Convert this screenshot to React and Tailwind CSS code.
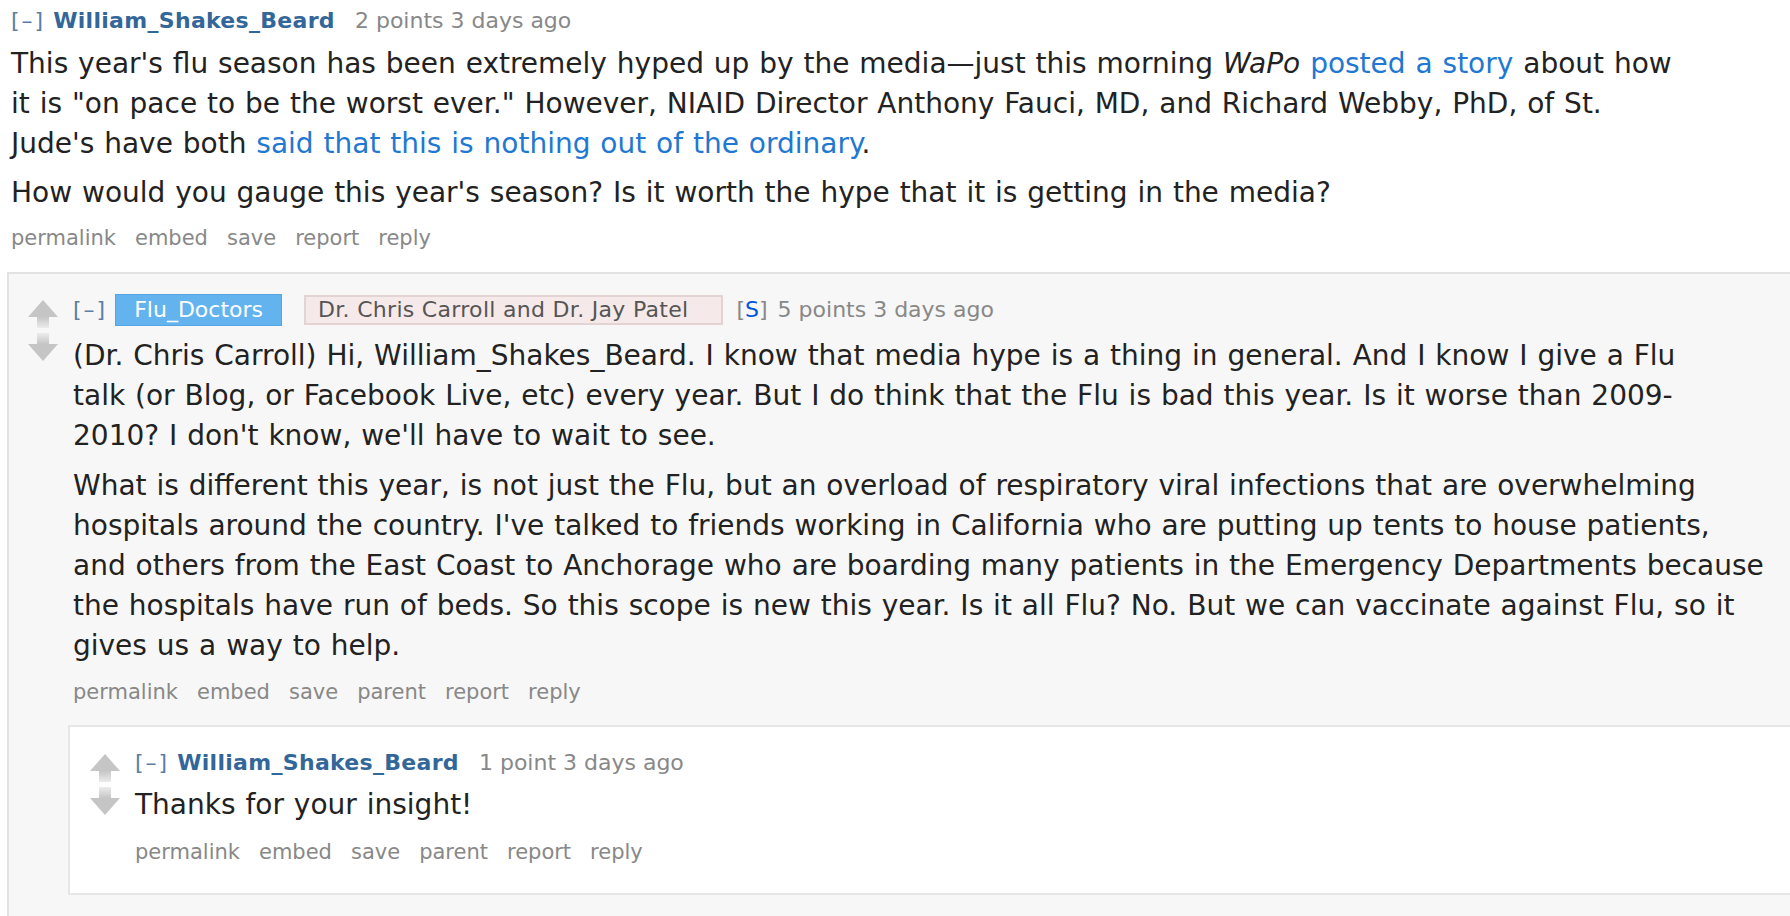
import React, { useId } from "react";

const font = "font-['DejaVu_Sans','Verdana',sans-serif]";

function VoteArrow({ down }) {
  const id = useId();
  return (
    <svg
      width="30"
      height="28"
      viewBox="0 0 30 28"
      className={down ? "rotate-180" : ""}
    >
      <defs>
        <linearGradient id={id} x1="0" y1="0" x2="0" y2="1">
          <stop offset="0" stopColor="#c5c5c5" />
          <stop offset="0.6" stopColor="#c5c5c5" />
          <stop offset="1" stopColor="#ececec" />
        </linearGradient>
      </defs>
      <path
        d="M15 0 L30 17 L21 17 L21 28 L9 28 L9 17 L0 17 Z"
        fill={`url(#${id})`}
      />
    </svg>
  );
}

function Arrows() {
  return (
    <div className="flex w-[30px] shrink-0 flex-col gap-[5px] pt-[6px]">
      <VoteArrow />
      <VoteArrow down />
    </div>
  );
}

function Buttons({ parent }) {
  const items = parent
    ? ["permalink", "embed", "save", "parent", "report", "reply"]
    : ["permalink", "embed", "save", "report", "reply"];
  return (
    <ul className="flex gap-[19px] text-[21px] leading-[30px] text-[#888]">
      {items.map((it) => (
        <li key={it}>{it}</li>
      ))}
    </ul>
  );
}

function Collapse() {
  return <span className="tracking-[2px] text-[#5a7ea6]">[–]</span>;
}

function Author({ children }) {
  return (
    <span className="ml-[8px] font-bold tracking-[0.3px] text-[#336699]">
      {children}
    </span>
  );
}

const link = "text-[#1f78d1]";
const md = "text-[28px] leading-[40px] [word-spacing:1px]";

export default function App() {
  return (
    <div
      className={`h-screen overflow-hidden bg-white text-[#222] ${font}`}
    >
      {/* top-level comment */}
      <div className="pl-[11px] pt-[6px]">
        <div className="flex items-baseline text-[22px] leading-[30px]">
          <Collapse />
          <Author>William_Shakes_Beard</Author>
          <span className="ml-[20px] text-[#888]">2 points 3 days ago</span>
        </div>
        <div className={`mt-[8px] max-w-[1680px] ${md}`}>
          <p>
            This year's flu season has been extremely hyped up by the
            media—just this morning <em>WaPo</em>{" "}
            <span className={link}>posted a story</span> about how it is "on
            pace to be the worst ever." However, NIAID Director Anthony Fauci,
            MD, and Richard Webby, PhD, of St. Jude's have both{" "}
            <span className={link}>
              said that this is nothing out of the ordinary
            </span>
            .
          </p>
          <p className="mt-[9px]">
            How would you gauge this year's season? Is it worth the hype that
            it is getting in the media?
          </p>
        </div>
        <div className="mt-[10px]">
          <Buttons />
        </div>
      </div>

      {/* reply thread */}
      <div className="ml-[7px] mt-[19px] border-2 border-r-0 border-[#e2e2e2] bg-[#f7f7f7] pb-[40px] pt-[20px]">
        <div className="flex gap-[15px] pl-[19px]">
          <Arrows />
          <div>
            <div className="flex items-center text-[22px] leading-[30px]">
              <Collapse />
              <span className="ml-[8px] border border-[#56a5e3] bg-[#63b3ef] px-[18px] text-white">
                Flu_Doctors
              </span>
              <span className="ml-[22px] border-2 border-[#e3d3d3] bg-[#f6e9e9] pl-[12px] pr-[33px] leading-[26px] tracking-[0.3px] text-[#555]">
                Dr. Chris Carroll and Dr. Jay Patel
              </span>
              <span className="ml-[13px] text-[#888]">
                [<span className="text-[#0055df]">S</span>]
              </span>
              <span className="ml-[10px] text-[#888]">5 points 3 days ago</span>
            </div>
            <div className={`mt-[10px] whitespace-nowrap ${md}`}>
              <p>
                (Dr. Chris Carroll) Hi, William_Shakes_Beard. I know that media
                hype is a thing in general. And I know I give a Flu
                <br />
                talk (or Blog, or Facebook Live, etc) every year. But I do think
                that the Flu is bad this year. Is it worse than 2009-
                <br />
                2010? I don't know, we'll have to wait to see.
              </p>
              <p className="mt-[10px]">
                What is different this year, is not just the Flu, but an
                overload of respiratory viral infections that are overwhelming
                <br />
                hospitals around the country. I've talked to friends working in
                California who are putting up tents to house patients,
                <br />
                and others from the East Coast to Anchorage who are boarding
                many patients in the Emergency Departments because
                <br />
                the hospitals have run of beds. So this scope is new this year.
                Is it all Flu? No. But we can vaccinate against Flu, so it
                <br />
                gives us a way to help.
              </p>
            </div>
            <div className="mt-[11px]">
              <Buttons parent />
            </div>
          </div>
        </div>

        {/* nested reply */}
        <div className="ml-[59px] mt-[18px] border-2 border-r-0 border-[#e6e6e6] bg-white pb-[26px] pt-[21px]">
          <div className="flex gap-[15px] pl-[20px]">
            <Arrows />
            <div>
              <div className="flex items-baseline text-[22px] leading-[30px]">
                <Collapse />
                <Author>William_Shakes_Beard</Author>
                <span className="ml-[20px] text-[#888]">
                  1 point 3 days ago
                </span>
              </div>
              <p className={`mt-[7px] ${md}`}>Thanks for your insight!</p>
              <div className="mt-[12px]">
                <Buttons parent />
              </div>
            </div>
          </div>
        </div>
      </div>
    </div>
  );
}
